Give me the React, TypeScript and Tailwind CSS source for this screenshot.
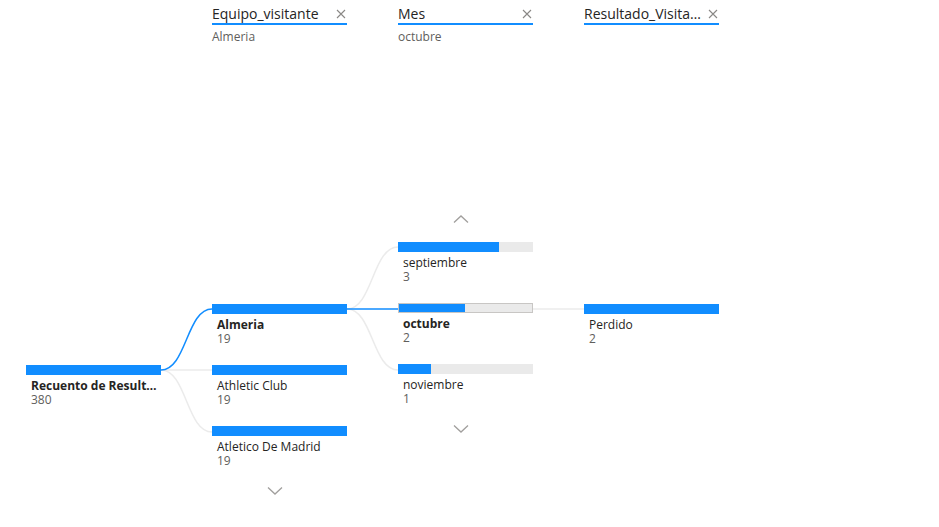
import React from "react";

const BLUE = "#118DFF";

type NodeData = { label: string; value: string; pct: number; bold?: boolean; selected?: boolean; track?: boolean };

function Chevron({ up }: { up?: boolean }) {
  return (
    <div className="h-[8px] ml-[55px] flex">
      <svg width="16" height="8" viewBox="0 0 16 8">
        <polyline
          points={up ? "1,7.5 8,1 15,7.5" : "1,0.5 8,7 15,0.5"}
          fill="none"
          stroke="#a19f9d"
          strokeWidth="1.3"
        />
      </svg>
    </div>
  );
}

function Node({ n }: { n: NodeData }) {
  return (
    <div className="h-[61px] w-[135px] flex flex-col">
      <div
        className={
          "h-[10px] w-[135px] flex " +
          (n.track ? "bg-[#eaeaea] " : "") +
          (n.selected ? "border border-[#c8c6c4]" : "")
        }
      >
        <div className="h-full bg-[#118DFF]" style={{ width: `${n.pct}%` }} />
      </div>
      <div
        className={
          "mt-[3px] pl-[5px] leading-[16px] text-[12px] text-[#252423] truncate " +
          (n.bold ? "font-bold" : "")
        }
      >
        {n.label}
      </div>
      <div className="pl-[5px] leading-[12px] text-[12px] text-[#605e5c]">{n.value}</div>
    </div>
  );
}

function Close() {
  return (
    <svg width="10" height="10" viewBox="0 0 10 10" className="shrink-0">
      <path d="M1 1 L9 9 M9 1 L1 9" stroke="#8a8886" strokeWidth="1.1" fill="none" />
    </svg>
  );
}

function Header({ title, sub }: { title?: string; sub?: string }) {
  return (
    <div className="h-[48px] w-[135px] pt-[5px]">
      {title && (
        <>
          <div className="h-[20px] border-b-2 border-[#118DFF] flex items-center justify-between">
            <span className="text-[14px] leading-[18px] text-[#252423] truncate">{title}</span>
            <div className="pl-[3px] pr-[1px] flex">
              <Close />
            </div>
          </div>
          {sub && <div className="mt-[4px] text-[12px] leading-[16px] text-[#605e5c]">{sub}</div>}
        </>
      )}
    </div>
  );
}

export default function App() {
  return (
    <div
      className="relative w-[939px] h-[527px] bg-white overflow-hidden"
      style={{ fontFamily: '"Segoe UI", "Open Sans", "Noto Sans", sans-serif' }}
    >
      <svg className="absolute inset-0" width="939" height="527">
        <g fill="none" strokeWidth="1.5">
          <path d="M161 370 L212 370" stroke="#ebebeb" />
          <path d="M161 370 C186.5 370 186.5 432 212 432" stroke="#ebebeb" />
          <path d="M347 309 C372.5 309 372.5 247 398 247" stroke="#ebebeb" />
          <path d="M347 309 C372.5 309 372.5 370 398 370" stroke="#ebebeb" />
          <path d="M533 309 L584 309" stroke="#ebebeb" />
          <path d="M161 370 C186.5 370 186.5 309 212 309" stroke={BLUE} />
          <path d="M347 309 L398 309" stroke={BLUE} />
        </g>
      </svg>
      <div className="relative flex gap-[51px] pl-[26px]">
        <div className="flex flex-col w-[135px]">
          <Header />
          <div className="mt-[317px]">
            <Node n={{ label: "Recuento de Resultado_Visitante", value: "380", pct: 100, bold: true }} />
          </div>
        </div>
        <div className="flex flex-col w-[135px]">
          <Header title="Equipo_visitante" sub="Almeria" />
          <div className="mt-[256px]">
            <Node n={{ label: "Almeria", value: "19", pct: 100, bold: true }} />
            <Node n={{ label: "Athletic Club", value: "19", pct: 100 }} />
            <Node n={{ label: "Atletico De Madrid", value: "19", pct: 100 }} />
          </div>
          <Chevron />
        </div>
        <div className="flex flex-col w-[135px]">
          <Header title="Mes" sub="octubre" />
          <div className="mt-[167px]">
            <Chevron up />
          </div>
          <div className="mt-[19px]">
            <Node n={{ label: "septiembre", value: "3", pct: 74.5, track: true }} />
            <Node n={{ label: "octubre", value: "2", pct: 49.6, bold: true, track: true, selected: true }} />
            <Node n={{ label: "noviembre", value: "1", pct: 24.8, track: true }} />
          </div>
          <Chevron />
        </div>
        <div className="flex flex-col w-[135px]">
          <Header title="Resultado_Visitante" />
          <div className="mt-[256px]">
            <Node n={{ label: "Perdido", value: "2", pct: 100 }} />
          </div>
        </div>
      </div>
    </div>
  );
}
